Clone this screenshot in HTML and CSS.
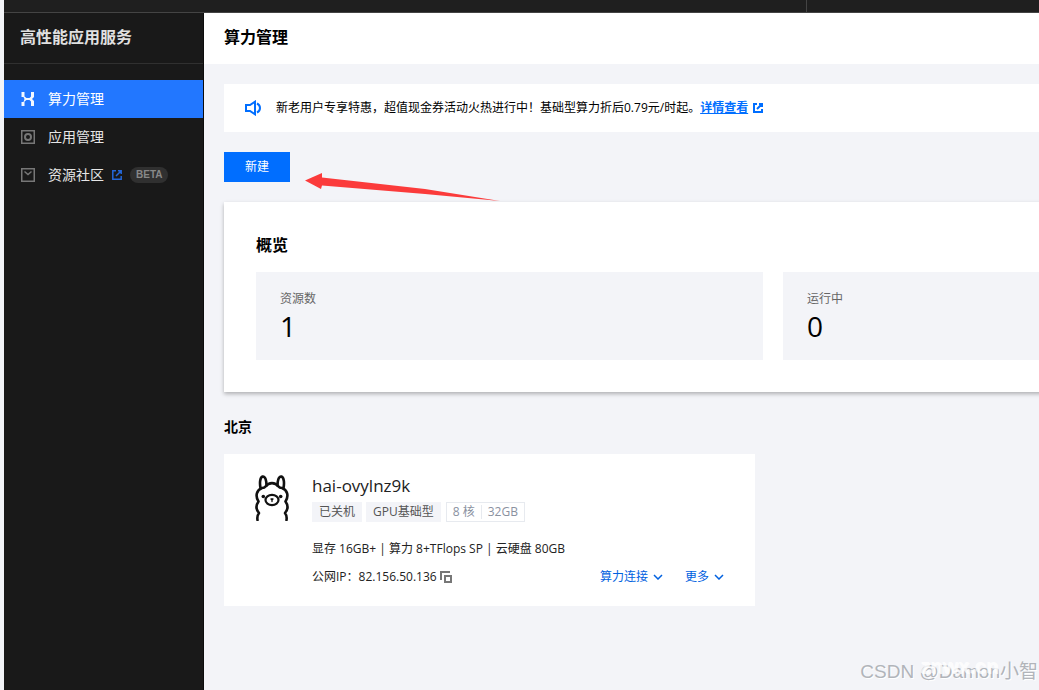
FILE: index.html
```html
<!DOCTYPE html>
<html lang="zh-CN">
<head>
<meta charset="utf-8">
<meta name="viewport" content="width=device-width, initial-scale=1">
<title>算力管理 - 高性能应用服务</title>
<link rel="stylesheet" href="styles.css">
</head>
<body>
<div class="app">
  <div class="topbar"><div class="topbar-left"></div></div>
  <div class="workspace">
    <aside class="sidebar">
      <h2 class="product">高性能应用服务</h2>
      <nav class="menu">
        <a class="menu-item active" href="#compute">
          <svg class="menu-icon" width="16" height="16" viewBox="0 0 16 16" fill="currentColor"><path d="M1.500 1h3v4.500L6.500 7h3l1.500-1.500V1h3v5l-2 2 2 2v5h-3v-4.500L9.500 9h-3l-2 1.500V15h-3v-4h2l1-3-1-2h-2z" fill-opacity=".95"/></svg>
          <span>算力管理</span>
        </a>
        <a class="menu-item" href="#apps">
          <svg class="menu-icon dim" width="16" height="16" viewBox="0 0 16 16" fill="none" stroke="currentColor"><path d="M1.750 1.750h12.500v12.500H1.750z" stroke-width="1.500"/><circle cx="8" cy="8" r="3" stroke-width="2"/></svg>
          <span>应用管理</span>
        </a>
        <a class="menu-item" href="#community">
          <svg class="menu-icon dim" width="16" height="16" viewBox="0 0 16 16" fill="none" stroke="currentColor" stroke-width="1.500"><path d="M1.750 1.750h12.500v12.500H1.750zM4.500 4.500L8 7.500l3.500-3"/></svg>
          <span>资源社区</span>
          <svg class="ext" width="10" height="10" viewBox="0 0 10 10" fill="none" stroke="currentColor" stroke-width="1.500"><path d="M4 .8H.8v8.400h8.400V6M6 .8h3.200V4M9 1L4 6"/></svg>
          <span class="beta">BETA</span>
        </a>
      </nav>
    </aside>
    <main class="main">
      <header class="page-head"><h1>算力管理</h1></header>
      <div class="content">
        <div class="notice">
          <svg class="horn" width="18" height="16" viewBox="0 0 18 16" fill="none" stroke="currentColor" stroke-width="2"><path d="M2 5h4l5-3.300v12.600L6 11H2z"/><path d="M13 3.500c4 2 4 7 0 9"/></svg>
          <p>新老用户专享特惠，超值现金券活动火热进行中！基础型算力折后0.79元/时起。<a href="#detail">详情查看</a></p>
          <svg class="notice-ext" width="10" height="10" viewBox="0 0 10 10" fill="none" stroke="currentColor" stroke-width="2"><path d="M4 1H1v8h8V6M6 1h3v3M9 1L4 6"/></svg>
        </div>
        <div class="toolbar">
          <button class="create" type="button">新建</button>
          <svg class="arrow" width="200" height="30" viewBox="0 0 200 30"><path d="M0 8.500L17 1v4.500L120 17l75 12-75-7L17 13.500l-1 3.500z" fill="#fb3b3b"/></svg>
        </div>
        <section class="overview">
          <h2>概览</h2>
          <div class="stats">
            <div class="stat"><span class="stat-label">资源数</span><span class="stat-value">1</span></div>
            <div class="stat"><span class="stat-label">运行中</span><span class="stat-value">0</span></div>
          </div>
        </section>
        <h3 class="region">北京</h3>
        <article class="instance">
          <svg class="llama" width="34" height="46" viewBox="0 0 34 46" fill="none" stroke="#111" stroke-width="2.600" stroke-linecap="round" stroke-linejoin="round"><path d="M2.500 45c-.5-3 0-5 1.500-7-3.500-4-3-8-.5-11.500C0 21 1.500 15 7 13c1.500 0 2.500 0 3.500-1.500 3.500-4.500 9.500-4.500 13 0 1 1.500 2 1.500 3.500 1.500 5.500 2 7 8 3.500 13.500C33 30 33.500 34 30 38c1.500 2 2 4 1.500 7"/><path d="M5.500 13C4.500 8 5 2.500 7.500 1.500c3-.5 4 4.500 4 9M22.500 10.500c0-4.500 1-9.500 4-9 2.500 1 3 6.500 2 11.500"/><ellipse cx="17" cy="25" rx="6.500" ry="5.200" stroke-width="2.200"/><path d="M16 24h2l-1 1zM17 25v1.500" stroke-width="1.300"/><circle cx="8.300" cy="21.500" r="1.800" fill="#111" stroke="none"/><circle cx="25.700" cy="21.500" r="1.800" fill="#111" stroke="none"/></svg>
          <div class="instance-body">
            <h4>hai-ovylnz9k</h4>
            <div class="tags">
              <span class="tag">已关机</span><span class="tag">GPU基础型</span>
              <span class="spec"><span>8 核</span><span>32GB</span></span>
            </div>
            <p class="config">显存 16GB+ | 算力 8+TFlops SP | 云硬盘 80GB</p>
            <div class="instance-foot">
              <p class="ip">公网IP：82.156.50.136</p>
              <button class="copy" type="button" aria-label="复制"><svg width="12" height="12" viewBox="0 0 12 12" fill="none" stroke="currentColor" stroke-width="2"><path d="M1 9V1h9M5 5h6v6H5z"/></svg></button>
              <div class="actions">
                <button type="button">算力连接<svg width="10" height="6" viewBox="0 0 10 6" fill="none" stroke="currentColor" stroke-width="1.500"><path d="M1 1l4 4 4-4"/></svg></button>
                <button type="button">更多<svg width="10" height="6" viewBox="0 0 10 6" fill="none" stroke="currentColor" stroke-width="1.500"><path d="M1 1l4 4 4-4"/></svg></button>
              </div>
            </div>
          </div>
        </article>
      </div>
    </main>
  </div>
  <div class="watermark">CSDN @Damon小智<span class="site">znwx.cn</span></div>
</div>
</body>
</html>
```
FILE: styles.css
```css
* { box-sizing: border-box; }
body {
  margin: 0;
  background: #f3f4f8;
  color: #000;
  font: 12px/18px "Open Sans", "Noto Sans CJK SC", sans-serif;
}
h1, h2, h3, h4, p { margin: 0; }
button { font: inherit; border: 0; padding: 0; background: none; cursor: pointer; }
a { color: inherit; text-decoration: none; }
svg { flex: none; display: block; }

.app {
  position: relative;
  display: flex;
  flex-direction: column;
  min-height: 100vh;
  padding-left: 4px;
  overflow: hidden;
}
.topbar { display: flex; height: 13px; background: #1f1f1f; border-bottom: 1px solid #444; }
.topbar-left { width: 803px; border-right: 1px solid #444; }
.workspace { flex: 1; display: flex; }

.sidebar { flex: none; width: 200px; background: #191919; border-right: 1px solid #0c0c0c; }
.product {
  height: 51px;
  padding-left: 16px;
  border-bottom: 1px solid #303030;
  color: #e0e0e0;
  font-size: 16px;
  font-weight: 700;
  line-height: 48px;
}
.menu { padding-top: 16px; }
.menu-item {
  display: flex;
  align-items: center;
  height: 38px;
  padding-left: 16px;
  color: #e6e6e6;
  font-size: 14px;
}
.menu-item.active { background: #2277ff; color: #fff; }
.menu-icon { margin-right: 12px; }
.dim { color: #777; }
.ext { margin-left: 8px; color: #2467d8; }
.beta {
  margin-left: 8px;
  padding: 0 6px;
  border-radius: 8px;
  background: #303030;
  color: #888;
  font: bold 10px/16px "Liberation Sans", sans-serif;
}

.main { flex: 1; min-width: 0; overflow: hidden; }
.page-head { height: 51px; padding-left: 20px; background: #fff; }
.page-head h1 { font-size: 16px; font-weight: 700; line-height: 48px; }
.content { padding: 20px 0 20px 20px; }

.notice {
  display: flex;
  align-items: center;
  height: 48px;
  padding-left: 20px;
  background: #fff;
  color: #000;
}
.horn { margin-right: 14px; color: #006eff; }
.notice a { color: #006eff; font-weight: 700; text-decoration: underline; }
.notice-ext { margin-left: 5px; color: #006eff; }

.toolbar { display: flex; margin-top: 20px; height: 50px; }
.create { width: 66px; height: 30px; background: #006eff; color: #fff; }
.arrow { margin: 20px 0 0 15px; }

.overview {
  width: max-content;
  padding: 32px;
  background: #fff;
  box-shadow: 0 2px 4px rgba(0, 0, 0, .28);
}
.overview h2 { font-size: 16px; font-weight: 700; line-height: 22px; }
.stats { display: flex; gap: 20px; margin-top: 16px; }
.stat {
  display: flex;
  flex-direction: column;
  width: 507px;
  height: 88px;
  padding: 18px 24px;
  background: #f3f4f8;
}
.stat-label { color: #666; }
.stat-value { font-size: 28px; line-height: 36px; }

.region { margin-top: 24px; font-size: 14px; font-weight: 700; line-height: 22px; }
.instance {
  display: flex;
  gap: 23px;
  width: 531px;
  margin-top: 16px;
  padding: 20px 31px;
  background: #fff;
}
.llama { margin-top: 1px; }
.instance-body { flex: 1; min-width: 0; }
.instance h4 { font-size: 17px; font-weight: 400; line-height: 24px; color: #222; }
.tags { display: flex; align-items: center; gap: 4px; margin-top: 4px; }
.tag { padding: 0 7px; height: 20px; background: #f3f4f8; color: #555; line-height: 19px; }
.spec { display: flex; align-items: center; height: 20px; margin-left: 1px; border: 1px solid #e7eaef; color: #8a919f; }
.spec span { padding: 0 6px; line-height: 14px; }
.spec span + span { border-left: 1px solid #e7eaef; }
.config { margin-top: 18px; color: #222; }
.instance-foot { display: flex; align-items: center; margin-top: 10px; color: #222; }
.copy { margin-left: 3px; color: #777; }
.actions { display: flex; gap: 22px; margin-left: auto; }
.actions button { display: flex; align-items: center; gap: 5px; color: #0061e0; }

.watermark {
  position: absolute;
  right: 1px;
  bottom: 4px;
  color: #b1b4ba;
  font: 19px/28px "Liberation Sans", "Noto Sans CJK SC", sans-serif;
  text-shadow: 1px 1px 0 #fff;
}
.site {
  position: absolute;
  left: 60px;
  top: -6px;
  color: #fff;
  font-size: 20px;
  font-weight: 700;
  opacity: .8;
}
```
